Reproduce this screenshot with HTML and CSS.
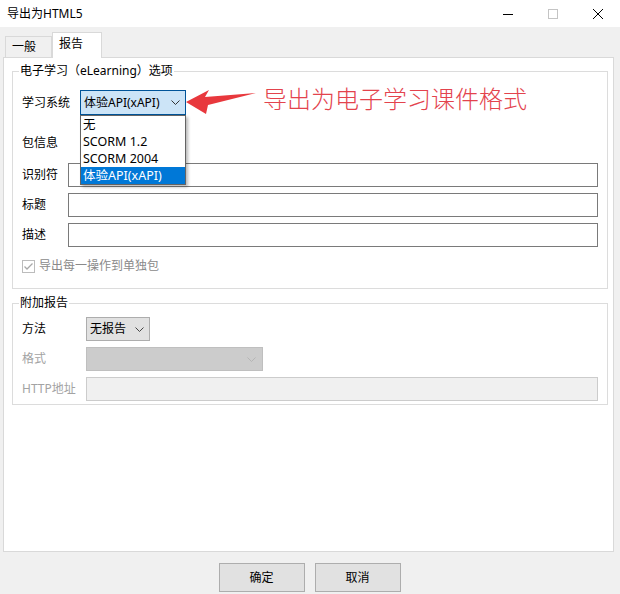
FILE: index.html
```html
<!DOCTYPE html>
<html lang="zh-CN">
<head>
<meta charset="utf-8">
<title>导出为HTML5</title>
<link rel="stylesheet" href="styles.css">
</head>
<body>
<div class="window">
  <div class="titlebar">
    <span class="title">导出为HTML5</span>
    <div class="controls">
      <div class="ctl"><svg width="12" height="12" viewBox="0 0 12 12"><line x1="1" y1="6.5" x2="11" y2="6.5" stroke="#000" stroke-width="1"/></svg></div>
      <div class="ctl"><svg width="12" height="12" viewBox="0 0 12 12"><rect x="1.5" y="1.5" width="9" height="9" fill="none" stroke="#c4c4c4" stroke-width="1"/></svg></div>
      <div class="ctl"><svg width="12" height="12" viewBox="0 0 12 12"><path d="M1 1 L11 11 M11 1 L1 11" stroke="#000" stroke-width="1"/></svg></div>
    </div>
  </div>

  <div class="content">
    <div class="tabstrip">
      <div class="tab">一般</div>
      <div class="tab active">报告</div>
    </div>
    <div class="panel">
      <div class="group g1">
        <div class="group-title">电子学习（eLearning）选项</div>
        <div class="row row-sys">
          <span class="label w58">学习系统</span>
          <div class="combo focus w106">
            <span>体验API(xAPI)</span>
            <svg class="chev" width="9" height="5" viewBox="0 0 9 5"><path d="M0.5 0.5 L4.5 4.5 L8.5 0.5" fill="none" stroke="#333" stroke-width="1"/></svg>
          </div>
        </div>
        <div class="row row-pkg"><span class="label">包信息</span></div>
        <div class="row row-field"><span class="label w46">识别符</span><div class="input"></div></div>
        <div class="row row-field"><span class="label w46">标题</span><div class="input"></div></div>
        <div class="row row-field"><span class="label w46">描述</span><div class="input"></div></div>
        <div class="check">
          <span class="box"><svg width="11" height="11" viewBox="0 0 11 11"><path d="M1.5 5.5 L4 8 L9.5 2.5" fill="none" stroke="#a8a8a8" stroke-width="1.3"/></svg></span>
          <span class="check-label">导出每一操作到单独包</span>
        </div>
      </div>

      <div class="group g2">
        <div class="group-title">附加报告</div>
        <div class="row row-r"><span class="label w64">方法</span>
          <div class="combo btn w64"><span>无报告</span>
            <svg class="chev" width="9" height="5" viewBox="0 0 9 5"><path d="M0.5 0.5 L4.5 4.5 L8.5 0.5" fill="none" stroke="#444" stroke-width="1"/></svg>
          </div>
        </div>
        <div class="row row-r"><span class="label w64 disabled">格式</span>
          <div class="combo dis w177"><span></span>
            <svg class="chev" width="9" height="5" viewBox="0 0 9 5"><path d="M0.5 0.5 L4.5 4.5 L8.5 0.5" fill="none" stroke="#b5b5b5" stroke-width="1"/></svg>
          </div>
        </div>
        <div class="row row-r"><span class="label w64 disabled">HTTP地址</span><div class="input dis-input"></div></div>
      </div>
    </div>

    <div class="buttons">
      <div class="button">确定</div>
      <div class="button">取消</div>
    </div>
  </div>

  <div class="dropdown">
    <div class="item">无</div>
    <div class="item">SCORM 1.2</div>
    <div class="item">SCORM 2004</div>
    <div class="item sel">体验API(xAPI)</div>
  </div>

  <svg class="arrow" width="620" height="594" viewBox="0 0 620 594">
    <polygon points="186,102 209,90 205,97 256,93 208,105 206,114" fill="#e8383d"/>
  </svg>
  <div class="note">导出为电子学习课件格式</div>
</div>
</body>
</html>
```

FILE: styles.css
```css
* { box-sizing: border-box; }

html, body {
  margin: 0;
  padding: 0;
}

body {
  width: 620px;
  height: 594px;
  overflow: hidden;
  background: #f0f0f0;
  font-family: "Noto Sans", "Noto Sans CJK SC", sans-serif;
  font-size: 12px;
  color: #000;
}

.window {
  position: relative;
  width: 620px;
  height: 594px;
}

.titlebar {
  height: 27px;
  background: #fff;
  display: flex;
  align-items: center;
  padding-left: 7px;
}

.title {
  line-height: 16px;
}

.controls {
  margin-left: auto;
  display: flex;
  height: 27px;
}

.ctl {
  width: 45px;
  height: 27px;
  display: flex;
  align-items: center;
  justify-content: center;
}

.content {
  padding: 0 6px 0 3px;
}

.tabstrip {
  height: 30px;
  display: flex;
  align-items: flex-end;
  padding-left: 2px;
}

.tab {
  width: 47px;
  height: 21px;
  border: 1px solid #d9d9d9;
  border-bottom: none;
  background: #f0f0f0;
  padding: 2px 0 0 6px;
  line-height: 16px;
}

.tab.active {
  position: relative;
  z-index: 2;
  width: 50px;
  height: 26px;
  margin-bottom: -1px;
  margin-left: 0;
  background: #fff;
  padding: 3px 0 0 6px;
}

.panel {
  width: 611px;
  height: 495px;
  border: 1px solid #d9d9d9;
  background: #fff;
  padding: 0 5px 0 8px;
  display: flex;
  flex-direction: column;
}

.group {
  border: 1px solid #dcdcdc;
  padding: 0 9px 14px 9px;
  display: flex;
  flex-direction: column;
}

.g1 { margin-top: 13px; }
.g2 { margin-top: 14px; padding-bottom: 3px; }

.group-title {
  align-self: flex-start;
  margin-top: -9px;
  margin-left: -3px;
  padding: 0 1px;
  background: #fff;
  line-height: 16px;
}

.row {
  display: flex;
  align-items: center;
}

.label {
  line-height: 16px;
  flex: none;
}

.w46 { width: 46px; }
.w58 { width: 58px; }
.w64 { width: 64px; }

.row-sys { margin-top: 11px; height: 25px; }
.row-pkg { margin-top: 16px; height: 24px; }
.row-field { margin-top: 6px; height: 24px; }
.row-pkg + .row-field { margin-top: 8px; }

.row-r { margin-top: 6px; height: 24px; }

.input {
  flex: 1;
  height: 24px;
  border: 1px solid #7a7a7a;
  background: #fff;
}

.dis-input {
  border-color: #cccccc;
  background: #f0f0f0;
}

.combo {
  height: 100%;
  display: flex;
  align-items: center;
  padding: 0 5px 0 3px;
  line-height: 16px;
  border: 1px solid #adadad;
}

.combo .chev { margin-left: auto; }

.combo.focus {
  background: #cce4f7;
  border-color: #005499;
}

.combo.btn {
  background: #e1e1e1;
}

.combo.dis {
  background: #cccccc;
  border-color: #bfbfbf;
  padding-right: 6px;
}

.w106 { width: 106px; }
.w177 { width: 177px; }
.w64.combo { width: 64px; }

.disabled { color: #a3a3a3; }

.check {
  margin-top: 11px;
  height: 16px;
  display: flex;
  align-items: center;
}

.box {
  width: 13px;
  height: 13px;
  border: 1px solid #bcbcbc;
  display: flex;
  align-items: center;
  justify-content: center;
}

.check-label {
  margin-left: 4px;
  line-height: 16px;
  color: #8a8a8a;
}

.buttons {
  margin-top: 11px;
  display: flex;
  justify-content: center;
  gap: 10px;
  padding-left: 2px;
}

.button {
  width: 86px;
  height: 29px;
  border: 1px solid #adadad;
  background: #e1e1e1;
  display: flex;
  align-items: center;
  justify-content: center;
  line-height: 16px;
}

.dropdown {
  position: absolute;
  left: 80px;
  top: 115px;
  width: 106px;
  border: 1px solid #646464;
  background: #fff;
  box-shadow: 2px 2px 3px rgba(0, 0, 0, 0.28);
  z-index: 5;
}

.item {
  height: 17px;
  line-height: 17px;
  padding-left: 2px;
  font-size: 12.5px;
}

.item.sel {
  background: #0078d7;
  color: #fff;
}

.arrow {
  position: absolute;
  left: 0;
  top: 0;
  z-index: 6;
  pointer-events: none;
}

.note {
  position: absolute;
  left: 263px;
  top: 82px;
  font-family: "Noto Sans CJK SC", sans-serif;
  font-weight: 300;
  font-size: 24px;
  line-height: 32px;
  color: #e3434d;
  white-space: nowrap;
  z-index: 6;
}
```
